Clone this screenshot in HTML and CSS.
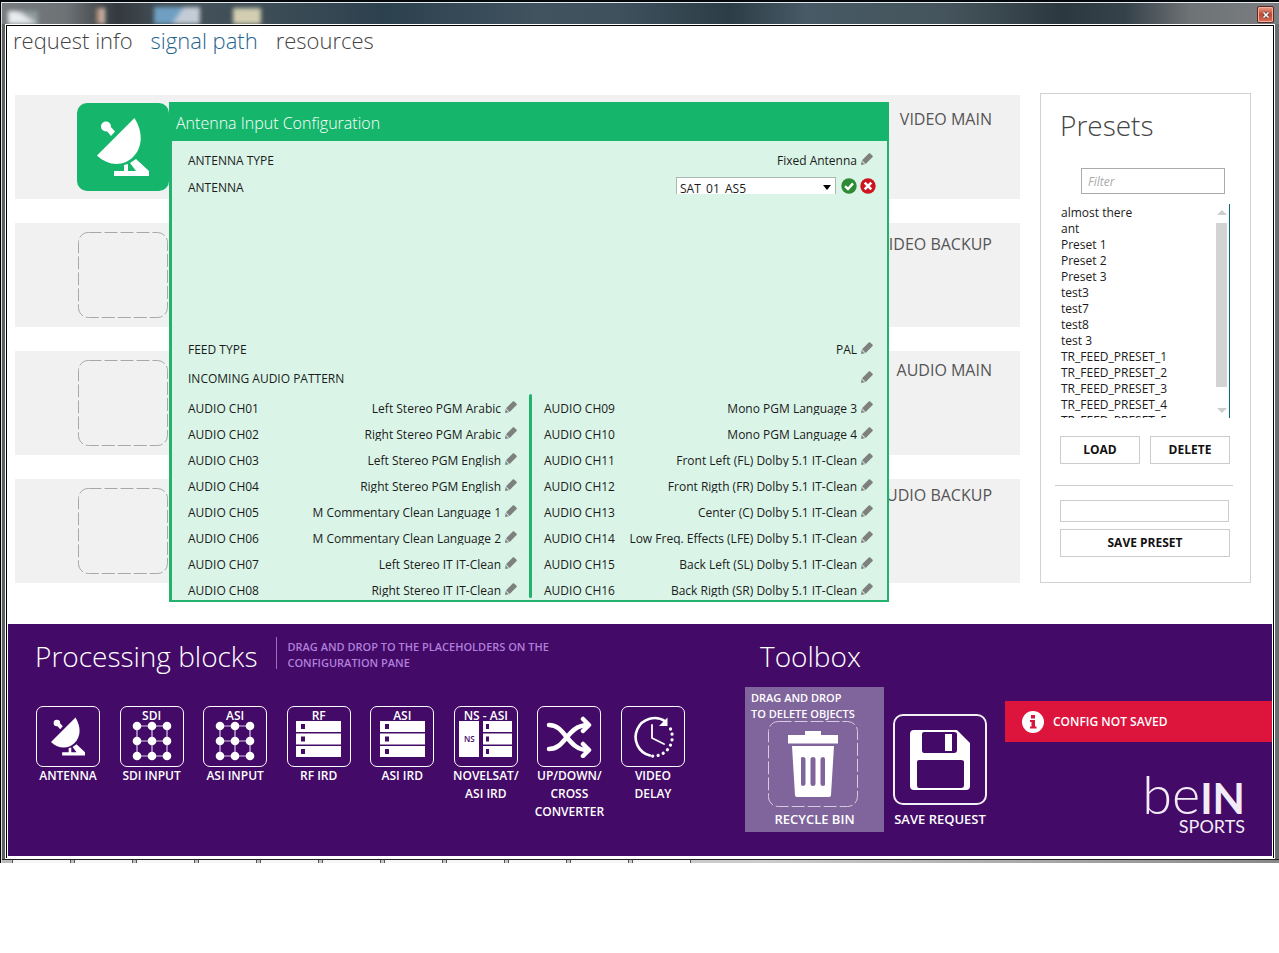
FILE: index.html
```html
<!DOCTYPE html>
<html lang="en">
<head>
<meta charset="utf-8">
<title>Signal path</title>
<link rel="stylesheet" href="styles.css">
</head>
<body>
<svg class="defs" aria-hidden="true">
  <symbol id="pencil" viewBox="0 0 12 12"><path d="M1 7.200 8 .3Q8.600 0 9.200.4L11.600 2.800Q12 3.400 11.600 4L4.700 10.900Z" fill="#7d807e"/><path d="M.7 7.800 4 11.200 0 12Z" fill="#7d807e"/><path d="M1.200 8.600 3.300 10.700" stroke="#daf5e7" stroke-width=".8"/></symbol>
  <symbol id="dish" viewBox="0 0 52 58"><path d="M37.500 0C46 14 46 29 36 39 26 49 11 48 0 37.500Z"/><circle cx="9" cy="8.500" r="5"/><path d="M9 12 13 8 18 13.500 14 18Z"/><path d="M33 45 39 41 52 53V58H17V53H27V47L31 46V53H39Z"/></symbol>
  <symbol id="matrix" viewBox="0 0 40 40"><path d="M5 5H35V35H5ZM5 20H35M20 5V35" fill="none" stroke="#d8c8e6" stroke-width="1.200"/><g><circle cx="5" cy="5" r="4.300"/><circle cx="20" cy="5" r="4.300"/><circle cx="35" cy="5" r="4.300"/><circle cx="5" cy="20" r="4.300"/><circle cx="20" cy="20" r="4.300"/><circle cx="35" cy="20" r="4.300"/><circle cx="5" cy="35" r="4.300"/><circle cx="20" cy="35" r="4.300"/><circle cx="35" cy="35" r="4.300"/></g></symbol>
  <symbol id="rack" viewBox="0 0 45 36"><path fill-rule="evenodd" d="M0 0H45V11H0ZM5 3V8H9V3ZM0 12.500H45V23.500H0ZM5 15.500V20.500H9V15.500ZM0 25H45V36H0ZM5 28V33H9V28Z"/></symbol>
  <symbol id="slot" viewBox="0 0 90 86"><rect x=".5" y=".5" width="89" height="85" rx="10" fill="none" stroke="currentColor" stroke-dasharray="13 3"/></symbol>
</svg>
<div class="desktop">
<div class="window">
  <header class="titlebar"><div class="wallpaper"></div><button class="close" aria-label="Close"><svg viewBox="0 0 8 8"><path d="M1.500 1.500 6.500 6.500M6.500 1.500 1.500 6.500" stroke="#444" stroke-width="3"/><path d="M1.500 1.500 6.500 6.500M6.500 1.500 1.500 6.500" stroke="#fff" stroke-width="1.600"/></svg></button></header>
  <div class="frame"><div class="client">
    <nav class="tabs"><a href="#">request info</a><a href="#" class="active">signal path</a><a href="#">resources</a></nav>
    <main class="workspace">
      <section class="lanes">
        <div class="lane"><div class="source"><svg><use href="#dish"/></svg></div><h2>VIDEO MAIN</h2></div>
        <div class="lane"><svg class="slot"><use href="#slot"/></svg><h2>VIDEO BACKUP</h2></div>
        <div class="lane"><svg class="slot"><use href="#slot"/></svg><h2>AUDIO MAIN</h2></div>
        <div class="lane"><svg class="slot"><use href="#slot"/></svg><h2>AUDIO BACKUP</h2></div>
        <section class="config">
          <h1>Antenna Input Configuration</h1>
          <div class="config-body">
            <div class="row"><span>ANTENNA TYPE</span><span class="value">Fixed Antenna</span><button class="edit" aria-label="Edit antenna type"><svg><use href="#pencil"/></svg></button></div>
            <div class="row antenna"><label for="antenna">ANTENNA</label>
              <div class="picker"><select id="antenna"><option>SAT_01_AS5</option></select></div>
              <button class="round" aria-label="Accept"><svg viewBox="0 0 16 16"><circle cx="8" cy="8" r="7.700" fill="#2f8a35"/><path d="M4 8.200 7 11 12 5.400" fill="none" stroke="#fff" stroke-width="2.400"/></svg></button>
              <button class="round" aria-label="Cancel"><svg viewBox="0 0 16 16"><circle cx="8" cy="8" r="7.700" fill="#cf1420"/><path d="M4.700 4.700 11.300 11.300M11.300 4.700 4.700 11.300" stroke="#fff" stroke-width="2.600"/></svg></button>
            </div>
            <div class="row feed"><span>FEED TYPE</span><span class="value">PAL</span><button class="edit" aria-label="Edit feed type"><svg><use href="#pencil"/></svg></button></div>
            <div class="row pattern"><span>INCOMING AUDIO PATTERN</span><span class="value"></span><button class="edit" aria-label="Edit audio pattern"><svg><use href="#pencil"/></svg></button></div>
            <div class="audio">
              <div class="channels">
                <div class="row"><span>AUDIO CH01</span><span class="value">Left Stereo PGM Arabic</span><button class="edit" aria-label="Edit CH01"><svg><use href="#pencil"/></svg></button></div>
                <div class="row"><span>AUDIO CH02</span><span class="value">Right Stereo PGM Arabic</span><button class="edit" aria-label="Edit CH02"><svg><use href="#pencil"/></svg></button></div>
                <div class="row"><span>AUDIO CH03</span><span class="value">Left Stereo PGM English</span><button class="edit" aria-label="Edit CH03"><svg><use href="#pencil"/></svg></button></div>
                <div class="row"><span>AUDIO CH04</span><span class="value">Right Stereo PGM English</span><button class="edit" aria-label="Edit CH04"><svg><use href="#pencil"/></svg></button></div>
                <div class="row"><span>AUDIO CH05</span><span class="value">M Commentary Clean Language 1</span><button class="edit" aria-label="Edit CH05"><svg><use href="#pencil"/></svg></button></div>
                <div class="row"><span>AUDIO CH06</span><span class="value">M Commentary Clean Language 2</span><button class="edit" aria-label="Edit CH06"><svg><use href="#pencil"/></svg></button></div>
                <div class="row"><span>AUDIO CH07</span><span class="value">Left Stereo IT IT-Clean</span><button class="edit" aria-label="Edit CH07"><svg><use href="#pencil"/></svg></button></div>
                <div class="row"><span>AUDIO CH08</span><span class="value">Right Stereo IT IT-Clean</span><button class="edit" aria-label="Edit CH08"><svg><use href="#pencil"/></svg></button></div>
              </div>
              <div class="divider"></div>
              <div class="channels">
                <div class="row"><span>AUDIO CH09</span><span class="value">Mono PGM Language 3</span><button class="edit" aria-label="Edit CH09"><svg><use href="#pencil"/></svg></button></div>
                <div class="row"><span>AUDIO CH10</span><span class="value">Mono PGM Language 4</span><button class="edit" aria-label="Edit CH10"><svg><use href="#pencil"/></svg></button></div>
                <div class="row"><span>AUDIO CH11</span><span class="value">Front Left (FL) Dolby 5.1 IT-Clean</span><button class="edit" aria-label="Edit CH11"><svg><use href="#pencil"/></svg></button></div>
                <div class="row"><span>AUDIO CH12</span><span class="value">Front Rigth (FR) Dolby 5.1 IT-Clean</span><button class="edit" aria-label="Edit CH12"><svg><use href="#pencil"/></svg></button></div>
                <div class="row"><span>AUDIO CH13</span><span class="value">Center (C) Dolby 5.1 IT-Clean</span><button class="edit" aria-label="Edit CH13"><svg><use href="#pencil"/></svg></button></div>
                <div class="row"><span>AUDIO CH14</span><span class="value">Low Freq. Effects (LFE) Dolby 5.1 IT-Clean</span><button class="edit" aria-label="Edit CH14"><svg><use href="#pencil"/></svg></button></div>
                <div class="row"><span>AUDIO CH15</span><span class="value">Back Left (SL) Dolby 5.1 IT-Clean</span><button class="edit" aria-label="Edit CH15"><svg><use href="#pencil"/></svg></button></div>
                <div class="row"><span>AUDIO CH16</span><span class="value">Back Rigth (SR) Dolby 5.1 IT-Clean</span><button class="edit" aria-label="Edit CH16"><svg><use href="#pencil"/></svg></button></div>
              </div>
            </div>
          </div>
        </section>
      </section>
      <aside class="presets">
        <h2>Presets</h2>
        <input class="filter" type="text" placeholder="Filter" aria-label="Filter presets">
        <div class="list">
          <ul><li>almost there</li><li>ant</li><li>Preset 1</li><li>Preset 2</li><li>Preset 3</li><li>test3</li><li>test7</li><li>test8</li><li>test 3</li><li>TR_FEED_PRESET_1</li><li>TR_FEED_PRESET_2</li><li>TR_FEED_PRESET_3</li><li>TR_FEED_PRESET_4</li><li>TR_FEED_PRESET_5</li></ul>
          <div class="scroll"><i class="up"></i><i class="thumb"></i><i class="down"></i></div>
        </div>
        <div class="actions"><button>LOAD</button><button>DELETE</button></div>
        <hr>
        <input class="name" type="text" aria-label="Preset name">
        <button class="save">SAVE PRESET</button>
      </aside>
    </main>
    <footer class="dock">
      <section class="blocks">
        <div class="dock-head"><h2>Processing blocks</h2><p>DRAG AND DROP TO THE PLACEHOLDERS ON THE CONFIGURATION PANE</p></div>
        <div class="tiles">
          <div class="tile"><div class="box"><svg class="i-dish"><use href="#dish"/></svg></div><span>ANTENNA</span></div>
          <div class="tile"><div class="box titled"><b>SDI</b><svg class="i-matrix"><use href="#matrix"/></svg></div><span>SDI INPUT</span></div>
          <div class="tile"><div class="box titled"><b>ASI</b><svg class="i-matrix"><use href="#matrix"/></svg></div><span>ASI INPUT</span></div>
          <div class="tile"><div class="box titled"><b>RF</b><svg class="i-rack"><use href="#rack"/></svg></div><span>RF IRD</span></div>
          <div class="tile"><div class="box titled"><b>ASI</b><svg class="i-rack"><use href="#rack"/></svg></div><span>ASI IRD</span></div>
          <div class="tile"><div class="box titled"><b>NS - ASI</b><div class="pair"><em>NS</em><svg class="i-half" viewBox="0 0 29 36"><path fill-rule="evenodd" d="M0 0H29V11H0ZM3 3V8H6V3ZM0 12.500H29V23.500H0ZM3 15.500V20.500H6V15.500ZM0 25H29V36H0ZM3 28V33H6V28Z"/></svg></div></div><span>NOVELSAT/<br>ASI IRD</span></div>
          <div class="tile"><div class="box"><svg class="i-cross" viewBox="0 0 46 42"><g fill="none" stroke="#fff" stroke-width="4.500" stroke-linecap="round" stroke-linejoin="round"><path d="M3 9C20 9 21 34 42 34M3 33C20 33 21 9 42 9"/><path d="M37 3 43 9 37 15M37 28 43 34 37 40"/></g></svg></div><span>UP/DOWN/<br>CROSS<br>CONVERTER</span></div>
          <div class="tile"><div class="box"><svg class="i-clock" viewBox="0 0 42 42"><g fill="none" stroke="#fff" stroke-width="2.600" stroke-linecap="round"><path d="M18 39.500A19 19 0 1 1 33.500 5.500"/><path d="M20 9V22L32 28" stroke-width="1.800"/><path d="M38.500 13A19 19 0 0 1 20 40" stroke-width="3.200" stroke-dasharray=".1 5.400"/></g><path d="M35.500 1.500V10H27Z"/></svg></div><span>VIDEO<br>DELAY</span></div>
        </div>
      </section>
      <section class="toolbox">
        <h2>Toolbox</h2>
        <div class="tools">
          <div class="bin"><p>DRAG AND DROP<br>TO DELETE OBJECTS</p>
            <div class="bin-slot"><svg class="bin-frame"><use href="#slot"/></svg><svg class="i-bin" viewBox="0 0 50 66"><path d="M17 0H33V4H50V12.500H0V4H17Z"/><path fill-rule="evenodd" d="M4 15H46L43 64Q43 66 41 66H9Q7 66 7 64ZM13 28V53Q13 55 15 55T17.500 53V28Q17.500 26 15 26T13 28ZM22.500 28V53Q22.500 55 25 55T27.500 53V28Q27.500 26 25 26T22.500 28ZM32.500 28V53Q32.500 55 35 55T37 53V28Q37 26 35 26T32.500 28Z"/></svg></div>
            <span>RECYCLE BIN</span></div>
          <button class="request"><span class="request-box"><svg viewBox="0 0 60 60"><path fill-rule="evenodd" d="M4 0H47L60 13V56Q60 60 56 60H4Q0 60 0 56V4Q0 0 4 0ZM14 2Q12 2 12 4V20Q12 23 14 23H44Q47 23 47 20V4Q47 2 44 2ZM9 30Q7 30 7 32V55Q7 58 9 58H51Q54 58 54 55V32Q54 30 51 30Z"/><path d="M35 4H42V21H35Z"/></svg></span>SAVE REQUEST</button>
        </div>
      </section>
      <section class="side">
        <div class="status" role="status"><svg viewBox="0 0 22 22"><circle cx="11" cy="11" r="11" fill="#fff"/><path d="M9 4H13V7.500H9ZM8 9H13V15.500H14.500V17.500H8V15.500H9.500V11H8Z" fill="#d9143f"/></svg>CONFIG NOT SAVED</div>
        <div class="logo"><div class="logo-top">be<strong>IN</strong></div><div class="logo-sub">SPORTS</div></div>
      </section>
    </footer>
  </div></div>
  <div class="taskbar"><i></i><i></i><i></i><i></i><i></i><i></i><i></i><i></i><i></i><i></i><i></i></div>
</div>
</div>
</body>
</html>
```
FILE: styles.css
```css
* { box-sizing: border-box; }
body { margin: 0; background: #fff; font: 12px/16px "Open Sans", "Noto Sans", sans-serif; color: #1b1b1b; }
h1, h2, p, ul { margin: 0; padding: 0; font-weight: 400; }
button { font: inherit; color: inherit; padding: 0; border: 0; background: none; }
svg { display: block; fill: #fff; }
.defs { position: absolute; width: 0; height: 0; }

.desktop { border-top: 2px solid #04090d; border-left: 1px solid #000; }
.window { border-top: 1px solid #e4e8ea; border-left: 1px solid #ddd; padding: 0 4px 0 3px; background: linear-gradient(90deg, #5b6063, #3b454b 50%, #6a6e70); }
.titlebar { display: flex; justify-content: flex-end; height: 21px; position: relative; overflow: hidden; margin: 0 -4px 0 -3px; background: linear-gradient(90deg, #777b7d 0, #6d7275 5%, #33393e 9%, #45525a 13%, #3f4e57 20%, #2c414e 30%, #40535f 42%, #3e515d 48%, #2d3d47 57%, #475a65 63%, #45545c 74%, #2c383f 83%, #36424a 88%, #6e7375 93%, #7b7e80 100%); }
.wallpaper { position: absolute; inset: 0; filter: blur(2px); background: linear-gradient(35deg, #e8ecee 60%, #8f989c 75%) 6px 8px / 30px 20px no-repeat, linear-gradient(90deg, #a07a66, #d9cabf) 94px 5px / 9px 20px no-repeat, linear-gradient(125deg, #6f9fc2 45%, #c3ccd6 52%) 152px 4px / 46px 22px no-repeat, linear-gradient(#cfcbb0, #d8d2b5) 231px 5px / 28px 22px no-repeat; }
.close { position: relative; width: 17px; height: 17px; margin: 3px 5px 0 0; border: 1px solid #5c2a22; border-radius: 2px; background: linear-gradient(#e9a08e, #c6452e 50%, #d9705a); box-shadow: inset 0 0 0 1px #eeb2a4; display: grid; place-items: center; }
.close svg { width: 8px; height: 8px; }
.frame { border: 1px solid #fff; }
.client { border: 1px solid #000; border-bottom: 0; padding: 0 1px 2px; background: #fff; }

.tabs { display: flex; gap: 18px; padding: 0 5px; height: 69px; font-size: 22px; line-height: 28px; font-weight: 300; }
.tabs a { color: #444; text-decoration: none; }
.tabs .active { color: #1f648f; }

.workspace { display: flex; align-items: flex-start; gap: 20px; padding: 0 21px 41px 7px; }
.lanes { position: relative; flex: 1; display: grid; gap: 24px; }
.lane { display: flex; align-items: flex-start; justify-content: space-between; height: 104px; padding: 0 28px 0 62px; background: #f1f1f1; }
.lane h2 { padding-top: 12px; font-size: 16px; line-height: 24px; color: #555; }
.lane:nth-child(2) h2 { padding-top: 9px; }
.lane:nth-child(3) h2 { padding-top: 7px; }
.lane:nth-child(4) h2 { padding-top: 4px; }
.slot { width: 90px; height: 86px; margin: 9px 0 0 1px; color: #a8a8a8; }
.source { width: 92px; height: 88px; margin-top: 8px; border-radius: 10px; background: #15b66b; display: grid; place-items: center; }
.source svg { width: 52px; height: 58px; }

.config { position: absolute; top: 7px; left: 154px; right: 131px; border: solid #23b26e; border-width: 0 2px 2px 3px; background: #daf5e7; }
.config h1 { margin: 0 -2px 0 -3px; padding: 0 7px; height: 39px; line-height: 42px; font-size: 16px; font-weight: 300; color: #fff; background: #15b66b; }
.config-body { padding: 9px 14px 0 16px; }
.row { display: flex; align-items: flex-start; height: 20px; line-height: 22px; }
.row .value { margin: 3px 0 0 auto; height: 14px; line-height: 16px; overflow: hidden; white-space: nowrap; }
.edit { margin: 3px 0 0 4px; }
.edit svg { width: 12px; height: 12px; }
.row.antenna { margin-top: 7px; }
.picker { margin-left: auto; height: 17px; width: 160px; overflow: hidden; position: relative; }
.picker::after { content: ""; position: absolute; right: 5px; top: 8px; border: solid transparent; border-width: 5px 4px 0; border-top-color: #000; }
.picker select { appearance: none; display: block; width: 100%; height: 18px; padding: 0 3px; border: 1px solid #a9b8b0; border-bottom: 0; border-radius: 0; background: #fff; font: inherit; color: inherit; }
.round { margin: 1px 0 0 5px; }
.round + .round { margin: 1px -3px 0 3px; }
.round svg { width: 16px; height: 16px; }
.row.feed { margin-top: 142px; }
.row.pattern { margin-top: 9px; }
.audio { display: grid; grid-template-columns: 1fr 3px 1fr; gap: 12px; margin-top: 6px; }
.channels { display: grid; gap: 6px; padding-top: 4px; }
.divider { margin-bottom: 2px; border-radius: 2px; background: #23b26e; }

.presets { width: 211px; height: 490px; padding: 15px 20px 0 19px; margin-top: -2px; border: 1px solid #d2d2d2; display: flex; flex-direction: column; }
.presets h2 { font-size: 28px; line-height: 32px; font-weight: 300; color: #444; }
.presets input { border: 1px solid #ababab; background: #fff; font: inherit; }
.presets .filter { height: 26px; margin: 27px 5px 0 21px; width: 144px; padding: 0 6px; font-style: italic; }
.filter::placeholder { color: #aaa; opacity: 1; }
.list { display: flex; justify-content: space-between; height: 214px; margin-top: 10px; overflow: hidden; border-right: 1px solid #0b6b7a; }
.list ul { list-style: none; padding: 1px; }
.scroll { width: 11px; margin-right: 2px; display: flex; flex-direction: column; align-items: center; padding-top: 6px; }
.scroll i { border: solid transparent; border-width: 0 5px 5px; border-bottom-color: #cdcdcd; }
.scroll .thumb { width: 11px; height: 164px; margin: 8px 0 21px; border: 0; background: #d3d3d3; }
.scroll .down { border-width: 5px 5px 0; border-top-color: #cdcdcd; }
.presets button { height: 28px; border: 1px solid #ccc; background: #fff; font-weight: 700; color: #111; }
.actions { display: grid; grid-template-columns: 1fr 1fr; gap: 10px; margin-top: 18px; }
.presets hr { margin: 21px -3px 14px -5px; border: 0; border-top: 1px solid #ccc; }
.presets .name { height: 22px; width: 169px; border-color: #ccc; }
.presets .save { margin-top: 7px; }

.dock { display: flex; align-items: flex-start; height: 232px; color: #fff; background: #430a67; font-size: 12px; font-weight: 600; }
.dock h2 { font-size: 28px; line-height: 38px; font-weight: 300; }
.blocks { width: 649px; margin-left: 28px; padding-top: 13px; }
.dock-head { display: flex; gap: 19px; height: 69px; margin-left: -1px; }
.dock-head p { width: 310px; height: 32px; padding: 2px 0 0 10px; border-left: 1px solid #9a6fc0; font-size: 11px; color: #b07fdc; font-weight: 600; }
.tiles { display: flex; justify-content: space-between; line-height: 18px; }
.tile { width: 64px; display: flex; flex-direction: column; align-items: center; text-align: center; white-space: nowrap; }
.box { width: 64px; height: 61px; border: 1px solid #fff; border-radius: 7px; display: flex; flex-direction: column; align-items: center; justify-content: center; flex: none; }
.box.titled { justify-content: flex-start; padding-top: 1px; }
.box b { font-weight: 600; line-height: 15px; height: 13px; }
.i-dish { width: 34px; height: 39px; }
.i-matrix { width: 40px; height: 40px; }
.i-rack { width: 45px; height: 36px; }
.pair { display: flex; gap: 4px; }
.pair em { width: 20px; height: 36px; background: #fff; color: #430a67; font: 600 8px/36px "Open Sans", sans-serif; }
.i-half { width: 29px; height: 36px; }
.i-cross { width: 46px; height: 42px; }
.i-clock { width: 42px; height: 42px; }
.toolbox { margin-left: 60px; padding-top: 13px; }
.toolbox h2 { padding-left: 15px; }
.tools { display: flex; gap: 7px; margin-top: 12px; align-items: flex-end; }
.bin { width: 139px; height: 145px; background: #80659d; text-align: center; font-size: 13px; }
.bin p { padding: 3px 6px 0; text-align: left; font-size: 11px; font-weight: 600; }
.bin-slot { display: grid; place-items: center; height: 86px; margin: -1px 3px 4px 0; }
.bin-slot > svg { grid-area: 1 / 1; }
.bin-frame { width: 90px; height: 86px; color: #d6cbe0; }
.i-bin { width: 50px; height: 66px; }
.request { width: 98px; height: 118px; display: flex; flex-direction: column; align-items: center; gap: 6px; font-size: 13px; white-space: nowrap; }
.request-box { width: 94px; height: 91px; border: 2px solid #f2eef5; border-radius: 10px; display: grid; place-items: center; }
.request svg { width: 60px; height: 60px; }
.side { flex: 1; padding: 77px 0 0 16px; }
.status { display: flex; align-items: center; gap: 9px; height: 41px; padding-left: 17px; background: #dd143c; }
.status svg { width: 22px; height: 22px; }
.logo { width: 104px; margin: 33px 27px 0 auto; font-family: Lato, sans-serif; text-align: right; white-space: nowrap; color: #f3ecf8; }
.logo-top { font-size: 54px; line-height: 38px; font-weight: 300; }
.logo-top strong { font-weight: 700; font-size: 42px; }
.logo-sub { font-size: 18px; line-height: 18px; font-weight: 400; }

.taskbar { display: flex; gap: 3px; height: 4px; margin: 0 -4px 0 -3px; padding-left: 10px; background: linear-gradient(90deg, #bbb, #ccc 60%, #888); border-top: 1px solid #222; }
.taskbar i { width: 59px; border: solid #555; border-width: 0 1px; background: #f6f6f6; }
```
